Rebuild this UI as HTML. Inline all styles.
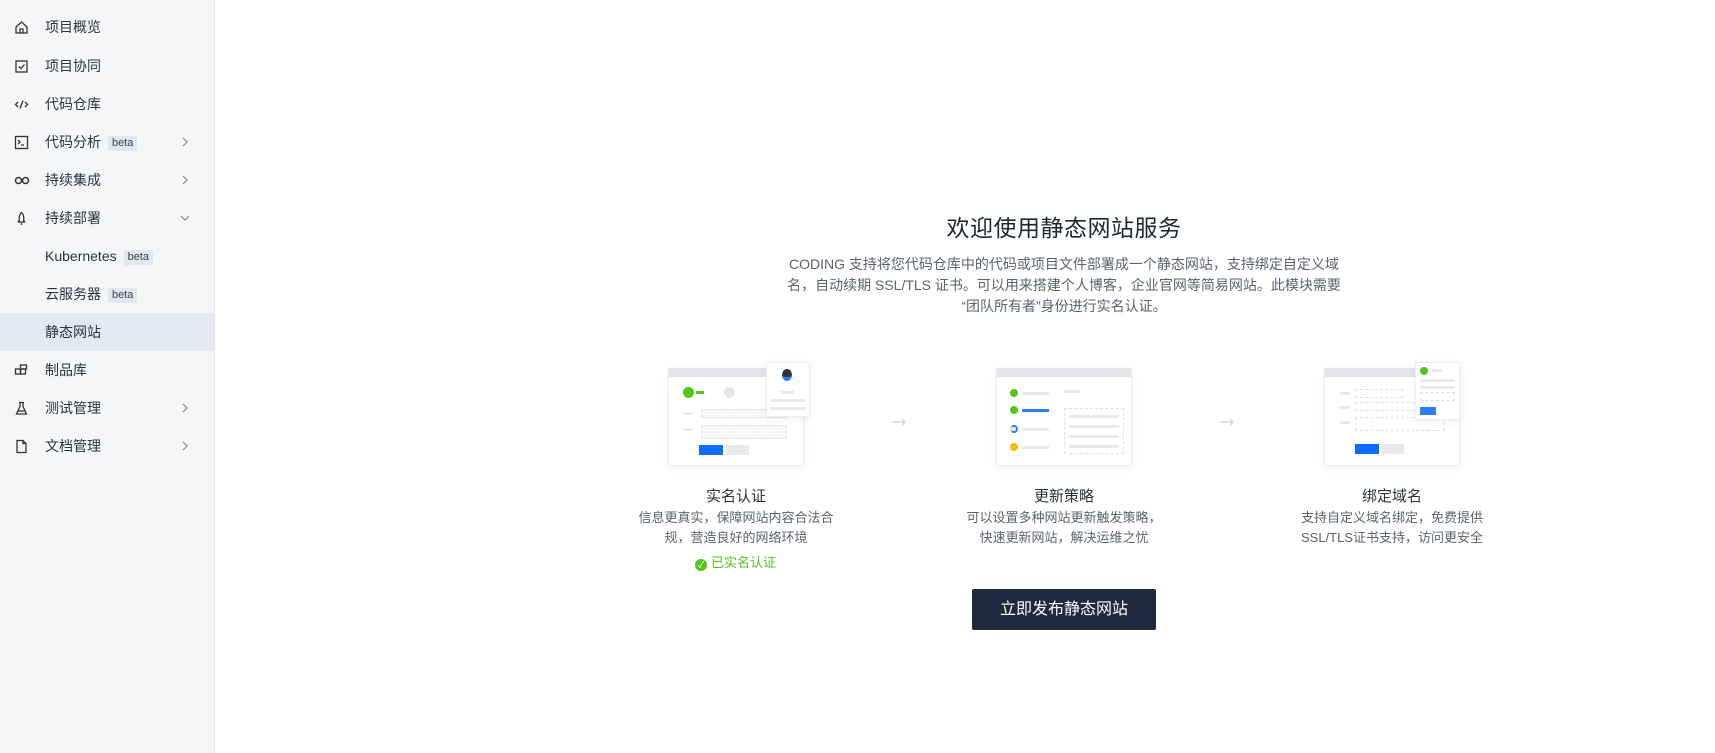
<!DOCTYPE html>
<html><head><meta charset="utf-8">
<style>
*{margin:0;padding:0;box-sizing:border-box}
body{width:1715px;height:753px;background:#fff;font-family:"Liberation Sans","Noto Sans CJK SC",sans-serif;color:#323a48;position:relative;overflow:hidden}
.side{position:absolute;left:0;top:0;width:215px;height:753px;background:#f5f6f8;border-right:1px solid #e4e6eb}
.it{position:absolute;left:0;width:214px;height:38px;font-size:14px;line-height:38px;color:#2b3240}
.it .t{position:absolute;left:45px}
.it svg.ic{position:absolute;left:14px;top:12px}
.it .ch{position:absolute;left:180px;top:14px}
.beta{display:inline-block;background:#e3e6ed;color:#3b4352;font-size:11px;line-height:15px;padding:0 4px;margin-left:7px;vertical-align:1px;border-radius:2px}
.act{background:#e4e8ef}
.abs{position:absolute}
.card{position:absolute;background:#fff;border:1px solid #eceef2;box-shadow:0 2px 8px rgba(0,0,0,.06)}
.bar{position:absolute;background:#e8eaee}
.h{position:absolute;font-size:15px;color:#2b3240;text-align:center;width:300px}
.d{position:absolute;font-size:13px;color:#5b6270;text-align:center;width:300px;line-height:20px}
</style></head><body>
<div class="side">
<div class="it" style="top:8px"><svg class="ic" width="15" height="15" viewBox="0 0 15 15" fill="none" stroke="#333" stroke-width="1.3"><path d="M2 7L7.5 2 13 7V13H2z"/><path d="M6 13V9h3v4"/></svg><span class="t">项目概览</span></div>
<div class="it" style="top:47px"><svg class="ic" width="15" height="15" viewBox="0 0 15 15" fill="none" stroke="#333" stroke-width="1.3"><rect x="2" y="2" width="11" height="11"/><path d="M5 7.5l2 2 3.5-4"/></svg><span class="t">项目协同</span></div>
<div class="it" style="top:85px"><svg class="ic" width="15" height="15" viewBox="0 0 15 15" fill="none" stroke="#333" stroke-width="1.3"><path d="M4 5L1.5 7.5 4 10M11 5l2.5 2.5L11 10M9 3.5L6 11.5"/></svg><span class="t">代码仓库</span></div>
<div class="it" style="top:123px"><svg class="ic" width="15" height="15" viewBox="0 0 15 15" fill="none" stroke="#333" stroke-width="1.3"><rect x="1.5" y="1.5" width="12" height="12"/><path d="M4 5l2 2-2 2M7 10h3"/></svg><span class="t">代码分析<span class="beta">beta</span></span><svg class="ch" width="10" height="10" viewBox="0 0 10 10" fill="none" stroke="#888" stroke-width="1.2"><path d="M3 1l4 4-4 4"/></svg></div>
<div class="it" style="top:161px"><svg class="ic" width="16" height="15" viewBox="0 0 16 15" fill="none" stroke="#333" stroke-width="1.5"><circle cx="4.5" cy="7.5" r="3"/><circle cx="11.5" cy="7.5" r="3"/></svg><span class="t">持续集成</span><svg class="ch" width="10" height="10" viewBox="0 0 10 10" fill="none" stroke="#888" stroke-width="1.2"><path d="M3 1l4 4-4 4"/></svg></div>
<div class="it" style="top:199px"><svg class="ic" width="15" height="15" viewBox="0 0 15 15" fill="none" stroke="#333" stroke-width="1.3"><path d="M7.5 1.5C5 3.5 5 8 5.5 11h4C10 8 10 3.5 7.5 1.5z"/><path d="M5.5 9L4 11.5M9.5 9l1.5 2.5M7.5 12v2"/></svg><span class="t">持续部署</span><svg class="ch" width="10" height="10" viewBox="0 0 10 10" fill="none" stroke="#888" stroke-width="1.2"><path d="M1 3l4 4 4-4"/></svg></div>
<div class="it" style="top:237px"><span class="t">Kubernetes<span class="beta">beta</span></span></div>
<div class="it" style="top:275px"><span class="t">云服务器<span class="beta">beta</span></span></div>
<div class="it act" style="top:313px"><span class="t">静态网站</span></div>
<div class="it" style="top:351px"><svg class="ic" width="15" height="15" viewBox="0 0 15 15" fill="none" stroke="#333" stroke-width="1.3"><rect x="1.5" y="6" width="5" height="5"/><rect x="6.5" y="6" width="5" height="5"/><rect x="6.5" y="2" width="6" height="4"/></svg><span class="t">制品库</span></div>
<div class="it" style="top:389px"><svg class="ic" width="15" height="15" viewBox="0 0 15 15" fill="none" stroke="#333" stroke-width="1.3"><path d="M5 1.5h5M6 1.5v4L2.5 13h10L9 5.5v-4"/><path d="M4 10h7"/></svg><span class="t">测试管理</span><svg class="ch" width="10" height="10" viewBox="0 0 10 10" fill="none" stroke="#888" stroke-width="1.2"><path d="M3 1l4 4-4 4"/></svg></div>
<div class="it" style="top:427px"><svg class="ic" width="15" height="15" viewBox="0 0 15 15" fill="none" stroke="#333" stroke-width="1.3"><path d="M3 1.5h6l3 3v9H3z"/><path d="M9 1.5v3h3"/></svg><span class="t">文档管理</span><svg class="ch" width="10" height="10" viewBox="0 0 10 10" fill="none" stroke="#888" stroke-width="1.2"><path d="M3 1l4 4-4 4"/></svg></div>
</div>

<div class="abs" style="left:864px;top:209px;width:400px;text-align:center;font-size:23px;color:#1f2633;letter-spacing:0.5px">欢迎使用静态网站服务</div>
<div class="abs" style="left:664px;top:254px;width:800px;text-align:center;font-size:14px;line-height:21px;color:#5b6270;white-space:nowrap">CODING 支持将您代码仓库中的代码或项目文件部署成一个静态网站，支持绑定自定义域<br>名，自动续期 SSL/TLS 证书。可以用来搭建个人博客，企业官网等简易网站。此模块需要<br>“团队所有者”身份进行实名认证。</div>

<!-- card1 -->
<div class="card" style="left:668px;top:368px;width:136px;height:98px"></div>
<div class="bar" style="left:668px;top:368px;width:136px;height:9px;background:#e3e5ea"></div>
<div class="abs" style="left:683px;top:387px;width:11px;height:11px;border-radius:50%;background:#52c41a"></div>
<div class="abs" style="left:696px;top:391px;width:8px;height:3px;background:#52c41a"></div>
<div class="abs" style="left:724px;top:387px;width:11px;height:11px;border-radius:50%;background:#e3e5ea"></div>
<div class="bar" style="left:701px;top:409px;width:86px;height:9px;border:1px dashed #dde0e5;background:#f7f8fa"></div>
<div class="bar" style="left:701px;top:425px;width:86px;height:14px;border:1px dashed #dde0e5;background:#f7f8fa"></div>
<div class="bar" style="left:683px;top:412px;width:10px;height:3px"></div>
<div class="bar" style="left:683px;top:428px;width:10px;height:3px"></div>
<div class="abs" style="left:699px;top:445px;width:24px;height:10px;background:#0b6dff"></div>
<div class="bar" style="left:726px;top:445px;width:23px;height:10px"></div>
<div class="card" style="left:766px;top:362px;width:44px;height:55px"></div>
<div class="abs" style="left:782px;top:369px;width:10px;height:12px;border-radius:50%;background:#333;border-bottom:4px solid #2e7cf6"></div>
<div class="bar" style="left:781px;top:391px;width:13px;height:3px"></div>
<div class="bar" style="left:771px;top:399px;width:34px;height:3px"></div>
<div class="bar" style="left:771px;top:407px;width:34px;height:3px"></div>
<svg class="abs" style="left:892px;top:418px" width="15" height="8" viewBox="0 0 15 8" fill="none" stroke="#d5d8dd" stroke-width="1.5"><path d="M0 4h13M10 1l3 3-3 3"/></svg>

<!-- card2 -->
<div class="card" style="left:996px;top:368px;width:136px;height:98px"></div>
<div class="bar" style="left:996px;top:368px;width:136px;height:9px;background:#e3e5ea"></div>
<div class="abs" style="left:1010px;top:389px;width:8px;height:8px;border-radius:50%;background:#52c41a"></div>
<div class="bar" style="left:1022px;top:392px;width:27px;height:3px"></div>
<div class="abs" style="left:1010px;top:406px;width:8px;height:8px;border-radius:50%;background:#52c41a"></div>
<div class="abs" style="left:1022px;top:409px;width:27px;height:3px;background:#2e7cf6"></div>
<div class="abs" style="left:1010px;top:425px;width:8px;height:8px;border-radius:50%;border:2px solid #2e7cf6;border-left-color:#ddd"></div>
<div class="bar" style="left:1022px;top:428px;width:27px;height:3px"></div>
<div class="abs" style="left:1010px;top:443px;width:8px;height:8px;border-radius:50%;background:#f5b800"></div>
<div class="bar" style="left:1022px;top:446px;width:27px;height:3px"></div>
<div class="bar" style="left:1064px;top:390px;width:16px;height:3px"></div>
<div class="abs" style="left:1064px;top:408px;width:60px;height:46px;border:1px dashed #dde0e5"></div>
<div class="bar" style="left:1069px;top:415px;width:50px;height:3px"></div>
<div class="bar" style="left:1069px;top:425px;width:50px;height:3px"></div>
<div class="bar" style="left:1069px;top:435px;width:50px;height:3px"></div>
<div class="bar" style="left:1069px;top:445px;width:50px;height:3px"></div>
<svg class="abs" style="left:1220px;top:418px" width="15" height="8" viewBox="0 0 15 8" fill="none" stroke="#d5d8dd" stroke-width="1.5"><path d="M0 4h13M10 1l3 3-3 3"/></svg>

<!-- card3 -->
<div class="card" style="left:1324px;top:368px;width:136px;height:98px"></div>
<div class="bar" style="left:1324px;top:368px;width:136px;height:9px;background:#e3e5ea"></div>
<div class="abs" style="left:1355px;top:389px;width:48px;height:9px;border:1px dashed #dde0e5"></div>
<div class="abs" style="left:1355px;top:402px;width:90px;height:9px;border:1px dashed #dde0e5"></div>
<div class="abs" style="left:1355px;top:417px;width:90px;height:14px;border:1px dashed #dde0e5"></div>
<div class="bar" style="left:1340px;top:392px;width:10px;height:3px"></div>
<div class="bar" style="left:1340px;top:406px;width:10px;height:3px"></div>
<div class="bar" style="left:1340px;top:421px;width:10px;height:3px"></div>
<div class="abs" style="left:1355px;top:444px;width:24px;height:10px;background:#0b6dff"></div>
<div class="bar" style="left:1381px;top:444px;width:23px;height:10px"></div>
<div class="card" style="left:1415px;top:362px;width:45px;height:58px"></div>
<div class="abs" style="left:1420px;top:367px;width:8px;height:8px;border-radius:50%;background:#52c41a"></div>
<div class="bar" style="left:1432px;top:369px;width:10px;height:3px"></div>
<div class="bar" style="left:1420px;top:379px;width:35px;height:3px"></div>
<div class="bar" style="left:1420px;top:386px;width:35px;height:3px"></div>
<div class="abs" style="left:1420px;top:392px;width:35px;height:9px;border:1px dashed #dde0e5"></div>
<div class="abs" style="left:1420px;top:407px;width:16px;height:8px;background:#2e7cf6"></div>

<div class="h" style="left:586px;top:485px">实名认证</div>
<div class="d" style="left:586px;top:508px">信息更真实，保障网站内容合法合<br>规，营造良好的网络环境</div>
<div class="abs" style="left:695px;top:553px;font-size:13px;color:#52c41a;line-height:20px"><span style="display:inline-block;width:12px;height:12px;border-radius:50%;background:#52c41a;color:#fff;font-size:9px;line-height:12px;text-align:center;vertical-align:-1px;margin-right:4px">✓</span>已实名认证</div>
<div class="h" style="left:914px;top:485px">更新策略</div>
<div class="d" style="left:914px;top:508px">可以设置多种网站更新触发策略，<br>快速更新网站，解决运维之忧</div>
<div class="h" style="left:1242px;top:485px">绑定域名</div>
<div class="d" style="left:1242px;top:508px">支持自定义域名绑定，免费提供<br>SSL/TLS证书支持，访问更安全</div>

<div class="abs" style="left:972px;top:589px;width:184px;height:41px;background:#1f2a3f;border-radius:2px;color:#fff;font-size:16px;line-height:41px;text-align:center">立即发布静态网站</div>
</body></html>
